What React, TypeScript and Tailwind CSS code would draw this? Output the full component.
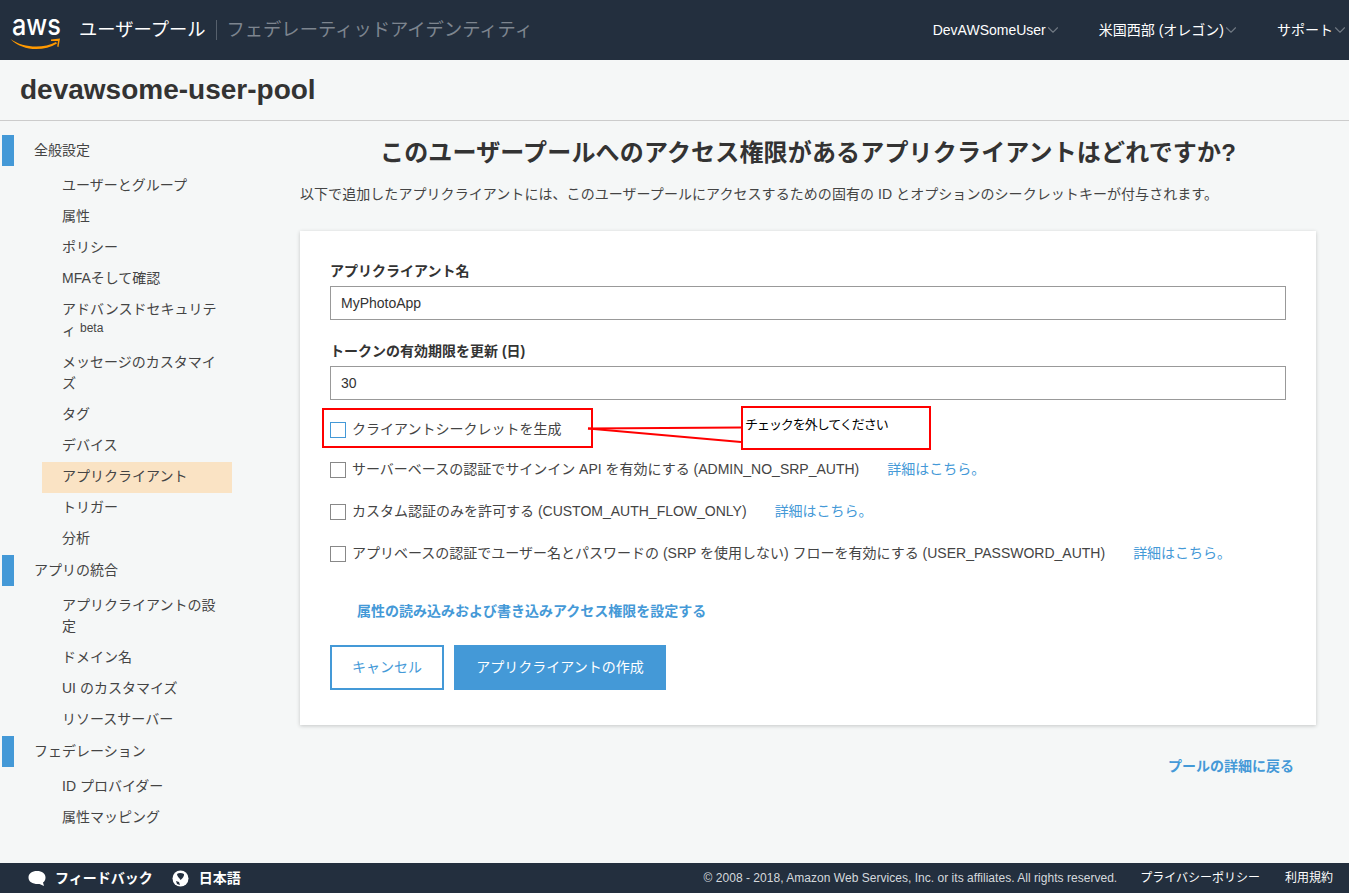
import { ChevronDown } from 'lucide-react'

const FONT = "font-['Liberation_Sans','Noto_Sans_CJK_JP',sans-serif]"

type NavItem = { label: string; active?: boolean; beta?: boolean }
type NavGroup = { title: string; items: NavItem[] }

const navGroups: NavGroup[] = [
  {
    title: '全般設定',
    items: [
      { label: 'ユーザーとグループ' },
      { label: '属性' },
      { label: 'ポリシー' },
      { label: 'MFAそして確認' },
      { label: 'アドバンスドセキュリティ', beta: true },
      { label: 'メッセージのカスタマイズ' },
      { label: 'タグ' },
      { label: 'デバイス' },
      { label: 'アプリクライアント', active: true },
      { label: 'トリガー' },
      { label: '分析' },
    ],
  },
  {
    title: 'アプリの統合',
    items: [
      { label: 'アプリクライアントの設定' },
      { label: 'ドメイン名' },
      { label: 'UI のカスタマイズ' },
      { label: 'リソースサーバー' },
    ],
  },
  {
    title: 'フェデレーション',
    items: [{ label: 'ID プロバイダー' }, { label: '属性マッピング' }],
  },
]

const authOptions = [
  { label: 'サーバーベースの認証でサインイン API を有効にする (ADMIN_NO_SRP_AUTH)', gap: 'mt-[19px]' },
  { label: 'カスタム認証のみを許可する (CUSTOM_AUTH_FLOW_ONLY)', gap: 'mt-[21px]' },
  { label: 'アプリベースの認証でユーザー名とパスワードの (SRP を使用しない) フローを有効にする (USER_PASSWORD_AUTH)', gap: 'mt-[21px]' },
]

function AwsLogo() {
  return (
    <div className="relative h-[40px] w-[50px] shrink-0">
      <span className="mt-[3px] block origin-left translate-x-[1px] scale-x-[0.87] text-[29px] leading-[24px] font-medium text-white font-['Inter',sans-serif]">
        aws
      </span>
      <svg className="absolute left-[-1px] top-[28px]" width="50" height="13" viewBox="0 0 50 13">
        <path d="M0.5 1 C 13 10 33 11 46 4 L 47 5.5 C 33 14 12 13 0.5 1 Z" fill="#ff9900" />
        <path d="M41 1.5 L 50 0.5 L 48.5 9 L 47.2 8.5 L 48 3 L 41 3 Z" fill="#ff9900" />
      </svg>
    </div>
  )
}

function HeaderMenu({ label }: { label: string }) {
  return (
    <div className="flex items-center">
      <span className="text-[14px] text-white">{label}</span>
      <ChevronDown size={18} strokeWidth={1.5} className="ml-[-2px] text-[#6f7882]" />
    </div>
  )
}

function Sidebar() {
  return (
    <nav className="w-[300px] shrink-0 pt-[14px] text-[14px] leading-[21px] text-[#444]">
      {navGroups.map((group) => (
        <div key={group.title}>
          <div className="flex h-[31px] items-center">
            <div className="ml-[2px] h-[31px] w-[12px] bg-[#4499d7]" />
            <span className="ml-[20px]">{group.title}</span>
          </div>
          <ul className="pt-[5px]">
            {group.items.map((item) => (
              <li
                key={item.label}
                className={`ml-[42px] w-[190px] pt-[4px] pl-[20px] pr-[14px] ${item.active ? 'bg-[#fae3c4]' : ''} ${item.beta ? 'pb-[7px]' : 'pb-[6px]'}`}
              >
                {item.label}
                {item.beta && <sup className="ml-1 text-[12px] top-[-3px]">beta</sup>}
              </li>
            ))}
          </ul>
        </div>
      ))}
    </nav>
  )
}

function Checkbox({ highlight }: { highlight?: boolean }) {
  return (
    <span className={`block h-4 w-4 shrink-0 border bg-white ${highlight ? 'border-[#4499d7]' : 'border-[#888]'}`} />
  )
}

function MoreLink() {
  return <a className="ml-[22px] text-[14px] text-[#4499d7]">詳細はこちら。</a>
}

function Field({ label, value }: { label: string; value: string }) {
  return (
    <div>
      <label className="block text-[14px] leading-[21px] font-bold text-[#333]">{label}</label>
      <div className="mt-[4px] flex h-[34px] items-center border border-[#999] bg-white px-[10px] text-[14px] text-[#333]">
        {value}
      </div>
    </div>
  )
}

function Annotation() {
  return (
    <>
      <div className="absolute left-[22px] top-[177px] h-[40px] w-[271px] border-2 border-[#f00]" />
      <svg className="absolute left-[285px] top-[190px]" width="160" height="40" viewBox="0 0 160 40">
        <path d="M3 7.5 L 156 6.5" stroke="#f00" strokeWidth="2" fill="none" />
        <path d="M3 7.5 L 156 21" stroke="#f00" strokeWidth="2" fill="none" />
      </svg>
      <div className="absolute left-[441px] top-[175px] flex h-[44px] w-[190px] items-start border-2 border-[#f00] bg-white pl-[2px] pt-[6px] text-[13px] leading-[21px] tracking-[-1.05px] text-black">
        チェックを外してください
      </div>
    </>
  )
}

export default function App() {
  return (
    <div className={`flex h-screen flex-col overflow-hidden bg-[#f5f7f7] ${FONT}`}>
      <header className="flex h-[60px] shrink-0 items-center bg-[#232f3e] pl-[11px]">
        <AwsLogo />
        <span className="ml-[18px] text-[18.3px] text-white">ユーザープール</span>
        <span className="ml-[10px] h-[20px] w-px bg-[#56606c]" />
        <span className="ml-[10px] text-[18.3px] text-[#7d858f]">フェデレーティッドアイデンティティ</span>
        <div className="ml-auto flex gap-[37px]">
          <HeaderMenu label="DevAWSomeUser" />
          <HeaderMenu label="米国西部 (オレゴン)" />
          <HeaderMenu label="サポート" />
        </div>
      </header>

      <div className="flex h-[61px] shrink-0 items-center border-b border-[#ccc] pl-[20px]">
        <h1 className="text-[28px] font-bold text-[#333]">devawsome-user-pool</h1>
      </div>

      <div className="flex min-h-0 flex-1">
        <Sidebar />
        <main className="w-[1016px] shrink-0">
          <h2 className="mt-[14px] text-center text-[24px] leading-[36px] font-bold tracking-[0.17px] text-[#333]">
            このユーザープールへのアクセス権限があるアプリクライアントはどれですか?
          </h2>
          <p className="mt-[13px] text-[14px] leading-[21px] tracking-[0.06px] text-[#444]">
            以下で追加したアプリクライアントには、このユーザープールにアクセスするための固有の ID とオプションのシークレットキーが付与されます。
          </p>

          <section className="relative mt-[26px] h-[494px] bg-white px-[30px] pt-[30px] shadow-[0_1px_4px_rgba(0,0,0,0.2)]">
            <Field label="アプリクライアント名" value="MyPhotoApp" />
            <div className="mt-[21px]">
              <Field label="トークンの有効期限を更新 (日)" value="30" />
            </div>

            <div className="mt-[19px] flex h-[21px] items-center gap-[6px] text-[14px] text-[#444]">
              <Checkbox highlight />
              クライアントシークレットを生成
            </div>
            {authOptions.map((option) => (
              <div key={option.label} className={`${option.gap} flex h-[21px] items-center gap-[6px] text-[14px] text-[#444]`}>
                <Checkbox />
                {option.label}
                <MoreLink />
              </div>
            ))}

            <a className="ml-[27px] mt-[37px] block text-[14px] leading-[21px] font-bold text-[#4499d7]">
              属性の読み込みおよび書き込みアクセス権限を設定する
            </a>

            <div className="mt-[23px] flex gap-[10px]">
              <button className="h-[45px] w-[114px] border-2 border-[#4499d7] bg-white text-[14px] text-[#4499d7]">
                キャンセル
              </button>
              <button className="h-[45px] w-[212px] bg-[#4499d7] text-[14px] text-white">
                アプリクライアントの作成
              </button>
            </div>

            <Annotation />
          </section>

          <div className="mt-[31px] pr-[22px] text-right text-[14px] leading-[21px] font-bold text-[#4499d7]">
            <a>プールの詳細に戻る</a>
          </div>
        </main>
      </div>

      <footer className="flex h-[30px] shrink-0 items-center bg-[#232f3e] pl-[28px] text-white">
        <svg width="18" height="17" viewBox="0 0 18 17">
          <path d="M9 1 C 14 1 17.5 3.5 17.5 7.5 C 17.5 10 16.5 11.5 15 12.5 L 16 16 L 11.5 14 C 5 14.5 0.5 12 0.5 7.5 C 0.5 3.5 4 1 9 1 Z" fill="#fff" />
        </svg>
        <span className="ml-[9px] text-[14px] font-bold">フィードバック</span>
        <svg className="ml-[19px]" width="17" height="17" viewBox="0 0 17 17">
          <circle cx="8.5" cy="8.5" r="8" fill="#fff" />
          <path d="M5 4 C 7 2.5 10 3 12 4 C 12.5 6 10.5 8.5 8.5 10 C 7.5 8 5 6.5 5 4 Z M4 11 L 7 12 L 8 15 L 5 14 Z" fill="#232f3e" />
        </svg>
        <span className="ml-[10px] text-[14px] font-bold">日本語</span>
        <div className="ml-auto flex items-center text-[12px] text-[#d5d9dd]">
          <span className="tracking-[0.03px]">© 2008 - 2018, Amazon Web Services, Inc. or its affiliates. All rights reserved.</span>
          <span className="ml-[23px] text-white">プライバシーポリシー</span>
          <span className="ml-[25px] mr-[16px] text-white">利用規約</span>
        </div>
      </footer>
    </div>
  )
}
